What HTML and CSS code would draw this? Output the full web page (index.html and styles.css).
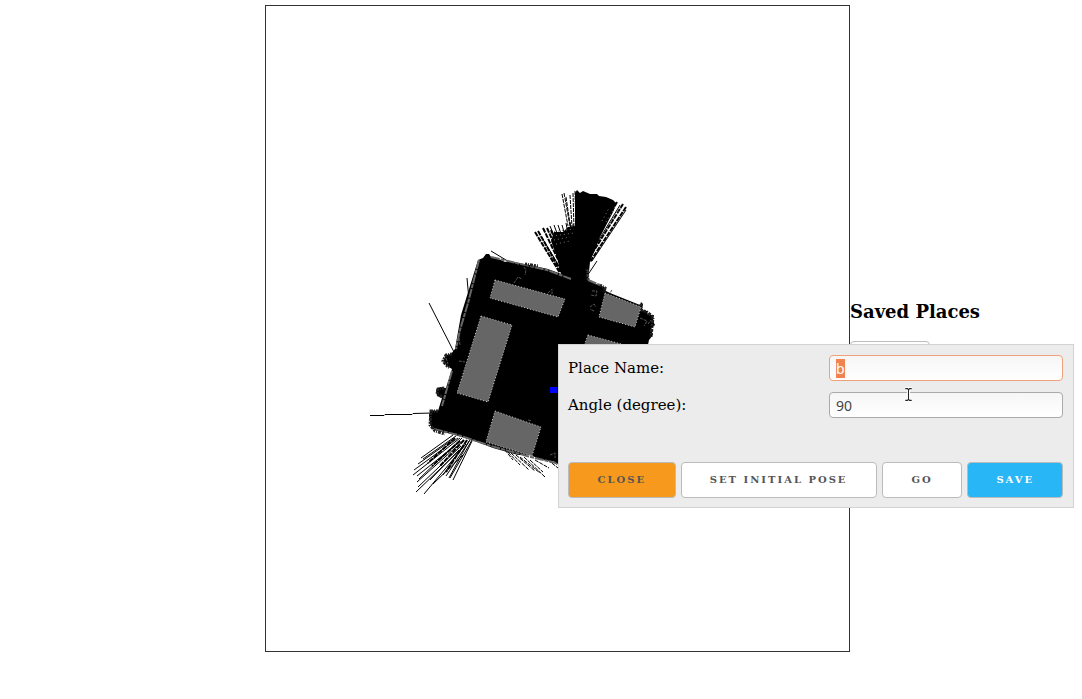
FILE: index.html
```html
<!DOCTYPE html>
<html lang="en">
<head>
<meta charset="utf-8">
<title>Saved Places</title>
<link rel="stylesheet" href="styles.css">
</head>
<body>
<main class="page">
  <section class="map">
    <svg class="map-view" viewBox="266 6 583 645" role="img" aria-label="Map">
      <!-- laser rays -->
      <path class="ray" d="M429 303L454 352M467 278L469 300M370 415.500L384 415.500L385 414.500L412 414.500L413 413.500L432 413M491 251L506 260M597 261L587 276"/>
      <path class="ray broken" d="M562 194L568 226M564 193L570 226M566 197L570 224M570 195L572 227M573 193L574 228M575 191L576 228"/>
      <path class="ray thick" d="M535 232L560 273M538 231L562 273M543 228L564 272M547 228L566 270M551 230L567 268"/>
      <path class="ray" d="M541 236L562 271M550 226L567 268M554 225L569 266M558 225L570 260M562 225L572 260M566 223L573 260M570 222L575 260M573 224L577 260"/>
      <path class="ray thick" d="M626 207L590 262M623 204L588 260M617 202L588 255M613 201L586 250M610 201L584 250"/>
      <path class="ray" d="M620 205L588 258M626 210L592 261"/>
      <path class="ray" d="M453 435L421 458M456 436L423 459M452 440L418 464M458 438L414 470M460 438L413 475M457 444L417 476M462 438L419 479M464 440L417 482M461 446L418 487M464 446L416 492M466 444L424 494M463 455L433 484M467 440L443 475M470 440L446 476M472 440L450 478M459 450L430 480M469 441L449 478M472 441L453 480"/>
      <path class="ray thick" d="M455 438L428 463M460 441L432 466M464 440L440 466M467 440L446 472"/>
      <path class="ray broken" d="M505 450L513 460M508 452L520 465M511 453L529 470M516 455L535 471M520 457L540 473M524 457L545 477M530 460L543 472M535 460L549 468M548 460L558 468M550 459L559 466"/>
      <path d="M575 193L577 190L580 193L583 191L590 194L597 194L599 196L606 197L613 200L616 203L613 212L600 237L590 262L588 282L580 286L561 274L557 257L551 241L554 232L563 232L568 227L575 226Z"/>
      <path class="speckle" d="M550 232L574 229M552 236L574 233M554 240L570 237M556 244L570 241M606 222L615 207M609 225L621 207M602 221L609 208"/>
      <!-- room -->
      <path d="M478 260L483 258L486 254L489 254L491 257L501 260L505 262L512 262L530 265L548 269L572 278L590 280L596 284L604 287L606 291L610 293L640 305L641 302L643 304L642 310L647 311L648 315L654 315L653 321L655 325L651 329L653 335L649 340L620 480L558 464L553 461L542 460L530 455L518 455L493 448L475 441L455 435L440 431L432 429L430 424L429 415L431 410L438 411L442 398L437 396L436 390L440 387L446 388L452 369L447 366L443 361L446 355L451 354L455 349L461 315Z"/>
      <path class="wall" d="M479 260L468 303L460 330L456 349M452 371L442 406M434 429L458 435L491 446L527 456L556 463M491 257L512 262L547 270L571 279M588 280L600 285"/>
      <path class="rough" d="M452 354L446 355L443 361L447 366L450 368M444 388L438 389L437 394L442 397M438 411L431 411L430 425L435 431L445 434M525 264L538 266M587 269L588 280M600 285L605 288L604 292M641 304L641 310L647 312L653 317L651 337"/>
      <path class="detail" d="M514 283L518 277L522 279M524 267L526 270L525 275M548 293L552 289L552 294M592 291L597 291L596 296L591 295M590 307L594 304L596 307M594 311L590 309M612 290L610 293M459 338L460 345M528 420L532 421M550 455L555 453L555 458M640 318L647 321L644 326M648 324L651 320M588 270L588 280M459 361L465 362M446 358L448 364"/>
      <g class="zone">
        <path d="M495 280L565 299L558 317L490 298Z"/>
        <path d="M481 316L512 325L488 402L457 393Z"/>
        <path d="M495 411L541 427L532 456L486 442Z"/>
        <path d="M605 293L641 307L635 327L599 317Z"/>
        <path d="M588 335L625 345L618 365L581 354Z"/>
      </g>
      <path class="robot" d="M550 387H557V393H550Z"/>
    </svg>
  </section>
  <aside class="places">
    <h2 class="places-title">Saved Places</h2>
    <button class="button place" type="button" aria-label="Saved place"></button>
  </aside>
</main>
<form class="dialog">
  <div class="fields">
    <label for="name">Place Name:</label>
    <input class="field" id="name" type="text" value="b" autofocus>
    <label for="angle">Angle (degree):</label>
    <input class="field" id="angle" type="text" value="90">
  </div>
  <div class="actions">
    <button class="button close" type="button">CLOSE</button>
    <button class="button pose" type="button">SET INITIAL POSE</button>
    <button class="button go" type="button">GO</button>
    <button class="button save" type="button">SAVE</button>
  </div>
</form>
<svg class="pointer" viewBox="0 0 8 14" aria-hidden="true">
  <path class="pointer-edge" d="M1 1.500H3L4 2.500L5 1.500H7M4 2V12M1 12.500H3L4 11.500L5 12.500H7"/>
  <path class="pointer-core" d="M1 1.500H3L4 2.500L5 1.500H7M4 2V12M1 12.500H3L4 11.500L5 12.500H7"/>
</svg>
<script src="script.js"></script>
</body>
</html>
```
FILE: styles.css
```css
* {
  box-sizing: border-box;
}
body {
  margin: 0;
  background: #fff;
  color: #000;
  font: 15px/24px "DejaVu Serif", serif;
}
.page {
  display: grid;
  grid-template-columns: 265fr 585fr 232fr;
  padding-top: 5px;
}
.map {
  grid-column: 2;
  border: 1px solid #333;
}
.map-view {
  display: block;
  width: 100%;
}
.ray, .wall, .rough, .detail, .speckle {
  fill: none;
}
.ray {
  stroke: #000;
  stroke-width: 1;
}
.thick {
  stroke-width: 2;
  stroke-dasharray: 5 1;
}
.broken {
  stroke-dasharray: 4 1;
}
.speckle {
  stroke: #777;
  stroke-width: 1;
  stroke-dasharray: 1 3;
}
.wall {
  stroke: #666;
  stroke-width: 2;
  stroke-dasharray: 9 1 4 1;
}
.rough {
  stroke: #222;
  stroke-width: 3;
  stroke-dasharray: 2 1 1 1 3 1;
}
.detail {
  stroke: #555;
  stroke-width: 1;
  stroke-dasharray: 3 1;
}
.zone {
  fill: #666;
  stroke: #ccc;
  stroke-width: 1;
  stroke-dasharray: 1 2;
}
.robot {
  fill: #00f;
}
.places {
  padding-top: 294px;
}
.places-title {
  margin: 0 0 16px;
  font-size: 18px;
  line-height: 26px;
}
.button {
  height: 36px;
  padding: 0;
  border: 1px solid #bbb;
  border-radius: 4px;
  background: #fff;
  color: #555;
  font: bold 10px/34px "DejaVu Serif", serif;
  letter-spacing: 2px;
  text-align: center;
  white-space: nowrap;
}
.place {
  display: block;
  width: 80px;
}
.dialog {
  position: absolute;
  top: 344px;
  right: 8px;
  width: 516px;
  padding: 10px 10px 9px 9px;
  border: 1px solid #d3d3d3;
  background: #ececec;
}
.fields {
  display: grid;
  grid-template-columns: 261px 1fr;
  row-gap: 11px;
  align-items: center;
  margin-bottom: 44px;
}
.field {
  width: 100%;
  height: 26px;
  padding: 0 6px;
  border: 1px solid #aaa;
  border-radius: 4px;
  outline: none;
  background: linear-gradient(#f6f6f6, #fff);
  color: #444;
  font: 14px "Noto Sans", sans-serif;
}
.field:focus {
  border-color: #f0a17c;
}
.field::selection {
  background: #f0834f;
  color: #fff;
}
.actions {
  display: grid;
  grid-template-columns: 108fr 197fr 81fr 96fr;
  gap: 5px;
}
.close {
  background: #f6991c;
}
.save {
  background: #29b6f6;
  color: #fff;
}
.pointer {
  position: absolute;
  top: 387px;
  left: 904px;
  width: 9px;
  height: 15px;
}
.pointer-edge {
  fill: none;
  stroke: #fff;
  stroke-width: 3;
}
.pointer-core {
  fill: none;
  stroke: #222;
  stroke-width: 1;
}
```
FILE: script.js
```js
const nameField = document.getElementById("name");
nameField.focus();
nameField.select();
```
